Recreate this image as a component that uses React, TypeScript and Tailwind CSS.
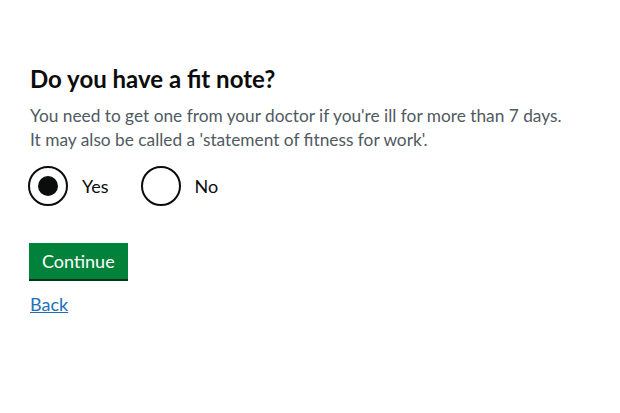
export default function App() {
  return (
    <div className="min-h-[413px] w-[620px] bg-white px-[30px] pt-[64px] font-['Lato',sans-serif] text-[#0b0c0c]">
      <h1 className="text-[24px] font-bold leading-[30px]">Do you have a fit note?</h1>
      <p className="mt-[10px] whitespace-nowrap text-[17.3px] leading-[24px] text-[#505a5f]">
        You need to get one from your doctor if you're ill for more than 7 days.
        <br />
        It may also be called a 'statement of fitness for work'.
      </p>

      <div className="-ml-[2px] mt-[14px] flex gap-[32px]">
        <Radio label="Yes" checked />
        <Radio label="No" />
      </div>

      <button className="-ml-px mt-[37px] block h-[36px] bg-[#00823b] px-[13px] text-[18px] leading-none text-white shadow-[0_2px_0_#003618]">
        Continue
      </button>

      <a href="#" className="mt-[13px] inline-block text-[18px] leading-[24px] text-[#1d70b8] underline">
        Back
      </a>
    </div>
  );
}

function Radio({ label, checked }: { label: string; checked?: boolean }) {
  return (
    <label className="flex items-center">
      <span className="flex h-[40px] w-[40px] items-center justify-center rounded-full border-2 border-[#0b0c0c]">
        {checked && <span className="h-[20px] w-[20px] rounded-full bg-[#0b0c0c]" />}
      </span>
      <span className="ml-[14px] text-[18px]">{label}</span>
    </label>
  );
}
